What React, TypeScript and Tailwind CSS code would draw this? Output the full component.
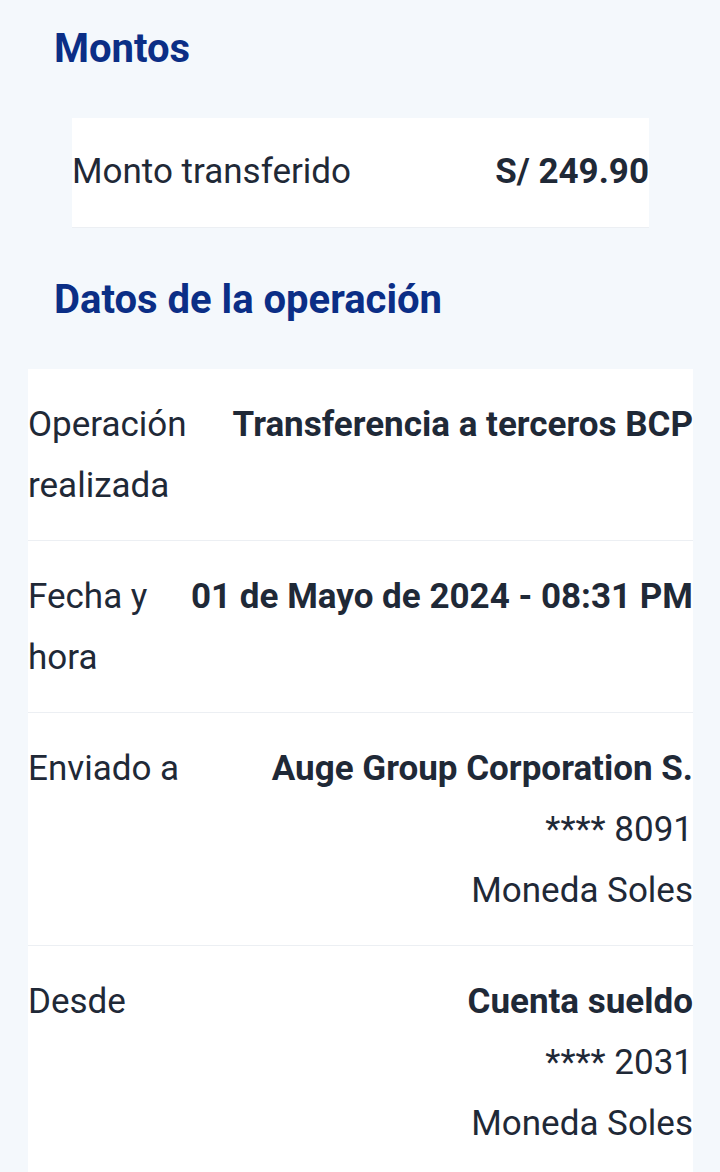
const rows = [
  { label: "Operación realizada", lines: ["Transferencia a terceros BCP"] },
  { label: "Fecha y hora", lines: ["01 de Mayo de 2024 - 08:31 PM"] },
  { label: "Enviado a", lines: ["Auge Group Corporation S.", "**** 8091", "Moneda Soles"] },
  { label: "Desde", lines: ["Cuenta sueldo", "**** 2031", "Moneda Soles"] },
];

export default function App() {
  return (
    <div
      className="min-h-[1172px] bg-[#f4f8fc] pt-6 text-[#1f2937]"
      style={{ fontFamily: "Roboto, 'Noto Sans', sans-serif" }}
    >
      {/* Montos */}
      <h2 className="flex h-12 items-center pt-[2px] pl-[54px] text-[40px] font-bold text-[#0b2e86]">Montos</h2>
      <div className="mt-[46px] ml-[72px] mr-[71px] flex h-[110px] items-center justify-between bg-white border-b border-[#eceff3]">
        <span className="text-[35px]">Monto transferido</span>
        <span className="text-[35px] font-bold">S/ 249.90</span>
      </div>

      {/* Datos de la operación */}
      <h2 className="mt-12 flex h-12 items-center pl-[54px] text-[40px] font-bold text-[#0b2e86]">
        Datos de la operación
      </h2>
      <div className="mt-[45px] ml-7 mr-[27px] bg-white divide-y divide-[#eceff3]">
        {rows.map((row) => (
          <div key={row.label} className="flex justify-between gap-[30px] pt-[25px] pb-6 text-[35px] leading-[61px]">
            <div className="min-w-0 flex-1">{row.label}</div>
            <div className="text-right">
              {row.lines.map((line, i) => (
                <div key={i} className={i === 0 ? "whitespace-nowrap font-bold" : "whitespace-nowrap"}>
                  {line}
                </div>
              ))}
            </div>
          </div>
        ))}
      </div>
    </div>
  );
}
